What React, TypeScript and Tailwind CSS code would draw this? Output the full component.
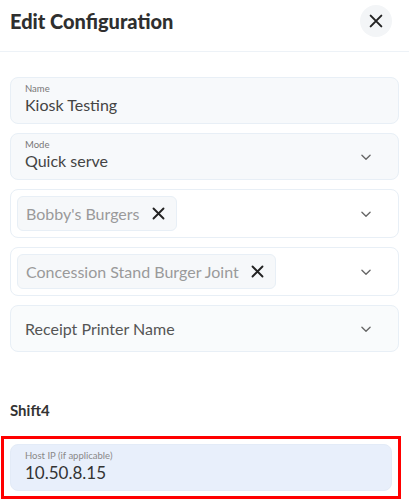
import React from "react";

function Chevron() {
  return (
    <svg width="14" height="14" viewBox="0 0 24 24" fill="none" stroke="#666" strokeWidth="2.3" strokeLinecap="round" strokeLinejoin="round">
      <path d="M5 9l7 7 7-7" />
    </svg>
  );
}

function XIcon({ size = 14 }: { size?: number }) {
  return (
    <svg width={size} height={size} viewBox="0 0 24 24" fill="none" stroke="#222" strokeWidth="3" strokeLinecap="round">
      <path d="M4 4l16 16M20 4L4 20" />
    </svg>
  );
}

function TextField({ label, value }: { label: string; value: string }) {
  return (
    <div className="h-[47px] rounded-lg border border-[#e8eff6] bg-[#f7f9fb] px-[14px] pt-[5px]">
      <div className="text-[9.5px] leading-[11px] text-[#777]">{label}</div>
      <div className="text-[16px] leading-[22px] text-[#444]">{value}</div>
    </div>
  );
}

function ChipSelect({ chip }: { chip: string }) {
  return (
    <div className="flex h-[49px] items-center justify-between rounded-lg border border-[#e8eff6] bg-white pl-[6px] pr-[25px]">
      <div className="flex h-[35px] items-center gap-[11px] rounded-md border border-[#e8eff6] bg-[#f6f8fa] pl-[8px] pr-[10px]">
        <span className="text-[16px] text-[#9a9a9a]">{chip}</span>
        <XIcon size={15} />
      </div>
      <Chevron />
    </div>
  );
}

export default function App() {
  return (
    <div className="h-[504px] w-[409px] bg-white" style={{ fontFamily: "Lato, 'Noto Sans', sans-serif" }}>
      <div className="flex h-[52px] items-start justify-between border-b border-[#edf2f7] pl-[10px] pr-[17px] pt-[5px]">
        <h1 className="text-[20px] font-black leading-[32px] text-[#2f2f2f]">Edit Configuration</h1>
        <button className="flex h-8 w-8 items-center justify-center rounded-full bg-[#f3f5f7]">
          <XIcon size={16} />
        </button>
      </div>

      <div className="flex flex-col gap-[9px] px-[10px] pt-[25px]">
        <TextField label="Name" value="Kiosk Testing" />
        <div className="flex h-[47px] items-center justify-between rounded-lg border border-[#e8eff6] bg-[#f7f9fb] pl-[14px] pr-[25px]">
          <div className="pb-[2px]">
            <div className="text-[9.5px] leading-[11px] text-[#777]">Mode</div>
            <div className="text-[16px] leading-[22px] text-[#444]">Quick serve</div>
          </div>
          <Chevron />
        </div>
        <ChipSelect chip="Bobby's Burgers" />
        <ChipSelect chip="Concession Stand Burger Joint" />
        <div className="flex h-[47px] items-center justify-between rounded-lg border border-[#e8eff6] bg-[#f9fbfc] pl-[14px] pr-[25px]">
          <span className="text-[16px] text-[#555]">Receipt Printer Name</span>
          <Chevron />
        </div>
      </div>

      <div className="px-[10px] pt-[48px] text-[15px] font-bold leading-[20px] text-[#333]">Shift4</div>

      <div className="ml-[1px] mt-[16px] w-[400px] border-[3px] border-[#ff0000] px-[6px] py-[5px]">
        <div className="h-[47px] rounded-lg border border-[#e3ebf7] bg-[#e8effb] px-[14px] pt-[5px]">
          <div className="text-[9.5px] leading-[11px] text-[#888]">Host IP (if applicable)</div>
          <div className="text-[17px] leading-[24px] text-[#333]">10.50.8.15</div>
        </div>
      </div>
    </div>
  );
}
